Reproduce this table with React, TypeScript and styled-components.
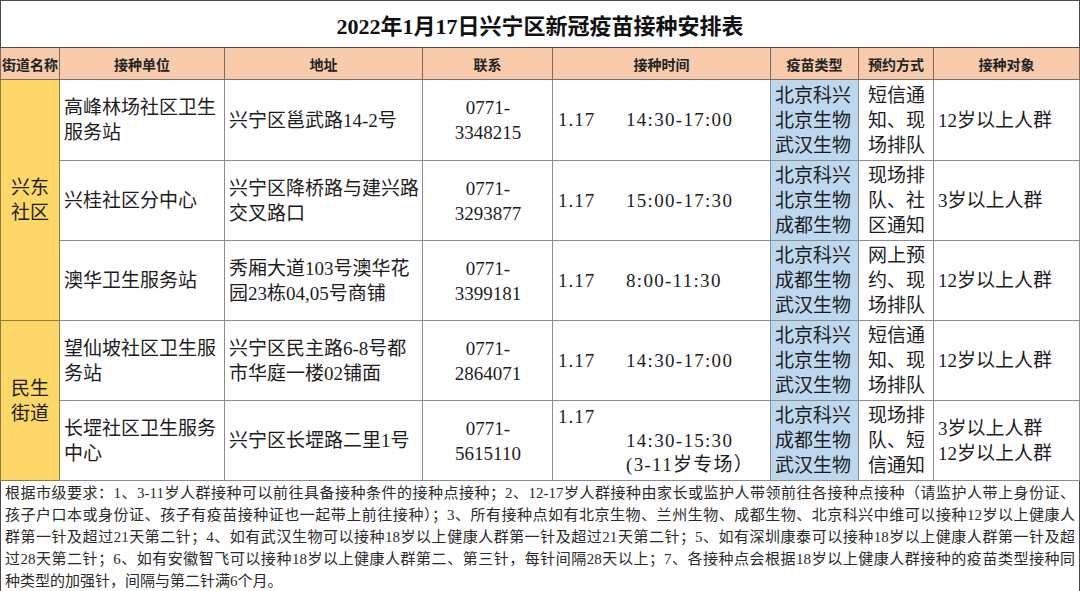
import React from "react";
import styled, { createGlobalStyle } from "styled-components";

const GlobalStyle = createGlobalStyle`
  html, body {
    margin: 0;
    padding: 0;
    background: #fff;
  }
  body {
    font-family: "Liberation Serif", "Noto Sans CJK SC", serif;
    color: #1c1c1c;
  }
`;

const Sheet = styled.table`
  width: 1079px;
  table-layout: fixed;
  border-collapse: collapse;
  border: 1px solid #4a4a4a;
`;

const TitleCell = styled.th`
  height: 46px;
  padding: 0;
  font-size: 22px;
  font-weight: 600;
  text-align: center;
  border: 1px solid #4a4a4a;
  background: #fff;
  color: #111;
`;

const HeadCell = styled.th`
  height: 31px;
  padding: 0;
  font-size: 14px;
  font-weight: 700;
  text-align: center;
  white-space: nowrap;
  background: #f8cbad;
  border: 1px solid #7a6a60;
  color: #222;
`;

const Cell = styled.td<{ $align?: "left" | "center"; $bg?: string }>`
  padding: 0 3px 0 4px;
  font-size: 19px;
  line-height: 25px;
  vertical-align: middle;
  white-space: nowrap;
  text-align: ${(p) => p.$align ?? "left"};
  background: ${(p) => p.$bg ?? "#fff"};
  border: 1px solid #8c8c8c;
`;

const TimeCell = styled(Cell)`
  padding-left: 5px;
`;

const GroupCell = styled.td`
  padding: 0;
  font-size: 19px;
  line-height: 25px;
  text-align: center;
  vertical-align: middle;
  background: #fdd868;
  border: 1px solid #8c7a4a;
`;

const Row = styled.tr<{ $h: number }>`
  height: ${(p) => p.$h}px;
`;

const TimeGrid = styled.div`
  display: grid;
  grid-template-columns: 68px auto;
  line-height: 24px;
`;

const DateText = styled.span`
  letter-spacing: 1px;
`;

const TimeText = styled.span`
  letter-spacing: 1.3px;
`;

const NotesCell = styled.td`
  height: 108px;
  padding: 1px 4px 0 4px;
  font-size: 15px;
  line-height: 22px;
  color: #2a2a2a;
  vertical-align: top;
  border: 1px solid #4a4a4a;
`;

const NoteLine = styled.div<{ $last?: boolean }>`
  text-align: ${(p) => (p.$last ? "left" : "justify")};
  text-align-last: ${(p) => (p.$last ? "left" : "justify")};
  white-space: ${(p) => (p.$last ? "nowrap" : "normal")};
  height: 22px;
  overflow: hidden;
`;

type Line = { date?: string; time?: string };

type Site = {
  unit: string[];
  address: string[];
  phone: string[];
  times: Line[];
  vaccines: string[];
  booking: string[];
  target: string[];
};

const groups: { name: string[]; sites: Site[] }[] = [
  {
    name: ["兴东", "社区"],
    sites: [
      {
        unit: ["高峰林场社区卫生", "服务站"],
        address: ["兴宁区邕武路14-2号"],
        phone: ["0771-", "3348215"],
        times: [{ date: "1.17", time: "14:30-17:00" }],
        vaccines: ["北京科兴", "北京生物", "武汉生物"],
        booking: ["短信通", "知、现", "场排队"],
        target: ["12岁以上人群"],
      },
      {
        unit: ["兴桂社区分中心"],
        address: ["兴宁区降桥路与建兴路", "交叉路口"],
        phone: ["0771-", "3293877"],
        times: [{ date: "1.17", time: "15:00-17:30" }],
        vaccines: ["北京科兴", "北京生物", "成都生物"],
        booking: ["现场排", "队、社", "区通知"],
        target: ["3岁以上人群"],
      },
      {
        unit: ["澳华卫生服务站"],
        address: ["秀厢大道103号澳华花", "园23栋04,05号商铺"],
        phone: ["0771-", "3399181"],
        times: [{ date: "1.17", time: "8:00-11:30" }],
        vaccines: ["北京科兴", "成都生物", "武汉生物"],
        booking: ["网上预", "约、现", "场排队"],
        target: ["12岁以上人群"],
      },
    ],
  },
  {
    name: ["民生", "街道"],
    sites: [
      {
        unit: ["望仙坡社区卫生服", "务站"],
        address: ["兴宁区民主路6-8号都", "市华庭一楼02铺面"],
        phone: ["0771-", "2864071"],
        times: [{ date: "1.17", time: "14:30-17:00" }],
        vaccines: ["北京科兴", "北京生物", "武汉生物"],
        booking: ["短信通", "知、现", "场排队"],
        target: ["12岁以上人群"],
      },
      {
        unit: ["长堽社区卫生服务", "中心"],
        address: ["兴宁区长堽路二里1号"],
        phone: ["0771-", "5615110"],
        times: [
          { date: "1.17" },
          { time: "14:30-15:30" },
          { time: "(3-11岁专场）" },
        ],
        vaccines: ["北京科兴", "成都生物", "武汉生物"],
        booking: ["现场排", "队、短", "信通知"],
        target: ["3岁以上人群", "12岁以上人群"],
      },
    ],
  },
];

const notes = [
  "根据市级要求：1、3-11岁人群接种可以前往具备接种条件的接种点接种；2、12-17岁人群接种由家长或监护人带领前往各接种点接种（请监护人带上身份证、",
  "孩子户口本或身份证、孩子有疫苗接种证也一起带上前往接种）；3、所有接种点如有北京生物、兰州生物、成都生物、北京科兴中维可以接种12岁以上健康人",
  "群第一针及超过21天第二针；4、如有武汉生物可以接种18岁以上健康人群第一针及超过21天第二针；5、如有深圳康泰可以接种18岁以上健康人群第一针及超",
  "过28天第二针；6、如有安徽智飞可以接种18岁以上健康人群第二、第三针，每针间隔28天以上；7、各接种点会根据18岁以上健康人群接种的疫苗类型接种同",
  "种类型的加强针，间隔与第二针满6个月。",
];

const columns = [
  { title: "街道名称", width: 59 },
  { title: "接种单位", width: 165 },
  { title: "地址", width: 198 },
  { title: "联系", width: 130 },
  { title: "接种时间", width: 218 },
  { title: "疫苗类型", width: 88 },
  { title: "预约方式", width: 75 },
  { title: "接种对象", width: 146 },
];

function Lines({ items }: { items: string[] }) {
  return (
    <>
      {items.map((t, i) => (
        <div key={i}>{t}</div>
      ))}
    </>
  );
}

export default function App() {
  return (
    <>
      <GlobalStyle />
      <Sheet>
        <colgroup>
          {columns.map((c) => (
            <col key={c.title} style={{ width: c.width }} />
          ))}
        </colgroup>
        <thead>
          <tr>
            <TitleCell colSpan={8}>2022年1月17日兴宁区新冠疫苗接种安排表</TitleCell>
          </tr>
          <tr>
            {columns.map((c) => (
              <HeadCell key={c.title}>{c.title}</HeadCell>
            ))}
          </tr>
        </thead>
        <tbody>
          {groups.map((g, gi) =>
            g.sites.map((s, si) => (
              <Row key={`${gi}-${si}`} $h={gi === 0 && si === 0 ? 81 : 80}>
                {si === 0 && (
                  <GroupCell rowSpan={g.sites.length}>
                    <Lines items={g.name} />
                  </GroupCell>
                )}
                <Cell>
                  <Lines items={s.unit} />
                </Cell>
                <Cell>
                  <Lines items={s.address} />
                </Cell>
                <Cell $align="center">
                  <Lines items={s.phone} />
                </Cell>
                <TimeCell>
                  <TimeGrid>
                    {s.times.map((l, li) => (
                      <React.Fragment key={li}>
                        <DateText>{l.date ?? ""}</DateText>
                        <TimeText>{l.time ?? ""}</TimeText>
                      </React.Fragment>
                    ))}
                  </TimeGrid>
                </TimeCell>
                <Cell $bg="#bdd7ee">
                  <Lines items={s.vaccines} />
                </Cell>
                <Cell $align="center">
                  <Lines items={s.booking} />
                </Cell>
                <Cell>
                  <Lines items={s.target} />
                </Cell>
              </Row>
            ))
          )}
          <tr>
            <NotesCell colSpan={8}>
              {notes.map((n, i) => (
                <NoteLine key={i} $last={i === notes.length - 1}>
                  {n}
                </NoteLine>
              ))}
            </NotesCell>
          </tr>
        </tbody>
      </Sheet>
    </>
  );
}
